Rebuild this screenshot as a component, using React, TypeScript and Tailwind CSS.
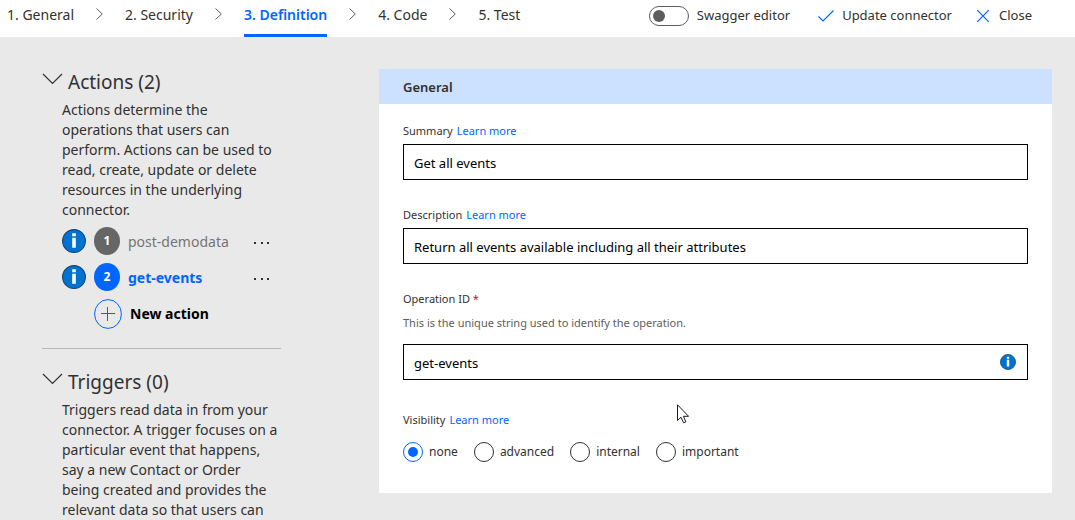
import { Fragment, useState } from "react";
import type { ReactNode } from "react";

const steps = ["1. General", "2. Security", "3. Definition", "4. Code", "5. Test"];
const visibilities = ["none", "advanced", "internal", "important"];

function InfoIcon({ className }: { className: string }) {
  return (
    <svg viewBox="0 0 24 24" className={className} aria-hidden="true">
      <circle cx="12" cy="12" r="11.4" fill="#0072d2" stroke="#12476f" strokeWidth="1.1" />
      <path d="M10.2 4.2h3.6v3h-3.6zM10.2 8.8h3.6v10h-3.6z" fill="#fff" />
    </svg>
  );
}

function StepChevron() {
  return (
    <svg viewBox="0 0 7 12" className="h-3 w-[7px] shrink-0" fill="none" stroke="#605e5c" aria-hidden="true">
      <path d="M.5.5 6.3 6 .5 11.5" />
    </svg>
  );
}

function SectionHeading({ children }: { children: ReactNode }) {
  return (
    <button type="button" className="flex w-full items-start gap-[5px] text-left">
      <svg viewBox="0 0 21 12" className="mt-1 h-3 w-[21px] shrink-0" fill="none" stroke="#323130" strokeWidth="1.2" aria-hidden="true">
        <path d="M1 1l9.5 9.5L20 1" />
      </svg>
      <h2 className="text-[19px] leading-[26px] whitespace-nowrap">{children}</h2>
    </button>
  );
}

function ActionRow({ index, name, active }: { index: number; name: string; active?: boolean }) {
  return (
    <li className="flex h-9 items-center">
      <InfoIcon className="size-6 shrink-0" />
      <span
        className={
          active
            ? "ml-2 flex h-7 w-[26px] shrink-0 items-center justify-center rounded-[50%] bg-[#0066ff] text-xs font-bold text-white"
            : "ml-2 flex h-7 w-[26px] shrink-0 items-center justify-center rounded-[50%] bg-[#666666] text-xs font-bold text-white"
        }
      >
        {index}
      </span>
      <a
        href="#"
        className={active ? "ml-2 pt-0.5 text-sm font-bold text-[#0066ff]" : "ml-2 pt-0.5 text-sm text-[#767574]"}
      >
        {name}
      </a>
      <button type="button" aria-label={`More options for ${name}`} className="mr-3 ml-auto flex h-5 w-[15px] items-center justify-between pt-1">
        <span className="size-0.5 bg-[#323130]" />
        <span className="size-0.5 bg-[#323130]" />
        <span className="size-0.5 bg-[#323130]" />
      </button>
    </li>
  );
}

function LearnMore() {
  return (
    <a href="#" className="text-[#0066ff]">
      Learn more
    </a>
  );
}

const inputClass = "block h-9 w-full border border-black bg-white px-[10px] pt-0.5 text-[13px] text-black outline-none";

export default function App() {
  const [visibility, setVisibility] = useState("none");

  return (
    <div className="relative flex min-h-screen flex-col bg-[#e9e9e9] font-['Noto_Sans',sans-serif] text-[#323130]">
      <header className="flex h-[37px] items-stretch justify-between bg-white pr-[43px] pl-[7px] whitespace-nowrap">
        <nav aria-label="Steps" className="flex gap-[22px] text-sm">
          {steps.map((step, i) => (
            <Fragment key={step}>
              {i > 0 && (
                <span className="flex h-7 items-center">
                  <StepChevron />
                </span>
              )}
              <a
                href="#"
                aria-current={i === 2 ? "step" : undefined}
                className={
                  i === 2
                    ? "border-b-[3px] border-[#0066ff] pt-[5px] leading-5 font-semibold text-[#0066ff]"
                    : "pt-[5px] leading-5"
                }
              >
                {step}
              </a>
            </Fragment>
          ))}
        </nav>
        <div className="flex h-[31px] items-center text-[13px]">
          <label className="flex items-center gap-2">
            <input
              type="checkbox"
              role="switch"
              className="h-5 w-10 appearance-none rounded-full border border-[#605e5c] bg-white before:m-[3px] before:block before:size-3 before:rounded-full before:bg-[#605e5c]"
            />
            Swagger editor
          </label>
          <button type="button" className="ml-7 flex items-center gap-2">
            <svg viewBox="0 0 16 12" className="h-3 w-4" fill="none" stroke="#0066ff" strokeWidth="1.2" aria-hidden="true">
              <path d="M.5 6.5 5 11 15.5.5" />
            </svg>
            Update connector
          </button>
          <button type="button" className="ml-[25px] flex items-center gap-[10px]">
            <svg viewBox="0 0 12 12" className="size-3" fill="none" stroke="#0066ff" strokeWidth="1.2" aria-hidden="true">
              <path d="M0 0l12 12M12 0 0 12" />
            </svg>
            Close
          </button>
        </div>
      </header>

      <main className="flex flex-1 items-start pr-[23px]">
        <aside className="w-[281px] shrink-0 pt-8 pl-[42px]">
          <SectionHeading>Actions (2)</SectionHeading>
          <div className="pt-[5px] pl-5">
            <p className="text-sm leading-5">
              Actions determine the operations that users can perform. Actions can be used to read, create, update or
              delete resources in the underlying connector.
            </p>
            <ul className="pt-[3px]">
              <ActionRow index={1} name="post-demodata" />
              <ActionRow index={2} name="get-events" active />
            </ul>
            <button type="button" className="ml-8 flex h-[38px] items-center gap-2 text-sm font-bold text-black">
              <svg viewBox="0 0 28 30" className="h-[30px] w-7" fill="none" stroke="#0066ff" aria-hidden="true">
                <ellipse cx="14" cy="15" rx="13.4" ry="14.4" />
                <path d="M7 14.5h14M13.5 8v14" />
              </svg>
              New action
            </button>
          </div>
          <hr className="mt-[15px] mb-5 border-[#b8b8b8]" />
          <SectionHeading>Triggers (0)</SectionHeading>
          <p className="pt-[5px] pl-5 text-sm leading-5">
            Triggers read data in from your connector. A trigger focuses on a particular event that happens, say a new
            Contact or Order being created and provides the relevant data so that users can
          </p>
        </aside>

        <section className="mt-8 ml-[98px] min-w-0 flex-1 bg-white">
          <h2 className="bg-[#cce0ff] px-6 pt-2 pb-[6px] text-[13px] leading-[21px] font-semibold">General</h2>
          <form className="px-6 pt-[17px] pb-[31px] text-[11px] leading-5">
            <div className="pb-[25px]">
              <div className="flex gap-1 pb-[3px]">
                <label htmlFor="summary">Summary</label> <LearnMore />
              </div>
              <input id="summary" type="text" defaultValue="Get all events" className={inputClass} />
            </div>
            <div className="pb-[25px]">
              <div className="flex gap-1 pb-[3px]">
                <label htmlFor="description">Description</label> <LearnMore />
              </div>
              <input
                id="description"
                type="text"
                defaultValue="Return all events available including all their attributes"
                className={inputClass}
              />
            </div>
            <div className="pb-[30px]">
              <label htmlFor="operation-id" className="block">
                Operation ID <span className="text-[#a4262c]">*</span>
              </label>
              <p id="operation-hint" className="pt-1 pb-[11px] text-[#605e5c]">
                This is the unique string used to identify the operation.
              </p>
              <div className="relative">
                <input
                  id="operation-id"
                  type="text"
                  aria-describedby="operation-hint"
                  defaultValue="get-events"
                  className={inputClass}
                />
                <InfoIcon className="absolute top-[10px] right-3 size-4" />
              </div>
            </div>
            <fieldset>
              <legend className="flex gap-1 pb-3">
                Visibility <LearnMore />
              </legend>
              <div className="flex flex-wrap gap-4 text-xs leading-5">
                {visibilities.map((value) => (
                  <label key={value} className="flex items-center gap-[6px]">
                    <input
                      type="radio"
                      name="visibility"
                      value={value}
                      checked={visibility === value}
                      onChange={() => setVisibility(value)}
                      className="size-5 appearance-none rounded-full border border-[#323130] bg-white checked:border-[#0066ff] checked:before:m-1 checked:before:block checked:before:size-[10px] checked:before:rounded-full checked:before:bg-[#0066ff]"
                    />
                    {value}
                  </label>
                ))}
              </div>
            </fieldset>
          </form>
        </section>
      </main>

      <svg viewBox="0 0 13 20" className="pointer-events-none absolute top-[404px] left-[677px] h-5 w-[13px]" aria-hidden="true">
        <path d="M.5.8v15.7l3.5-3.3 2.6 5.6 2.3-1-2.5-5.5h5.2z" fill="#fff" stroke="#1b1a26" />
      </svg>
    </div>
  );
}
